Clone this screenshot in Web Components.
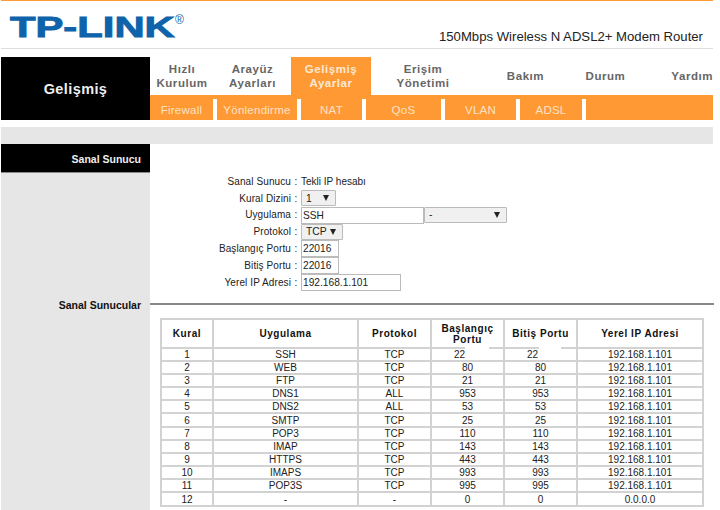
<!DOCTYPE html>
<html>
<head>
<meta charset="utf-8">
<style>
    html, body { margin: 0; padding: 0; background: #fff; }
    body { font-family: "Liberation Sans", Arial, sans-serif; overflow: hidden; height: 510px; }
    router-page { width: 712px; margin-left: 1px; }
</style>
</head>
<body>
<router-page>
    <router-header></router-header>
    <router-nav></router-nav>
    <router-main>
        <side-item slot="item">Sanal Sunucu</side-item>
        <server-form slot="form"></server-form>
        <span slot="section">Sanal Sunucular</span>
        <rule-table slot="table"></rule-table>
    </router-main>
</router-page>
<script>
class RouterPage extends HTMLElement
{
    constructor()
    {
        super();
        this.shadow = this.attachShadow({mode: "open"});
    }
    connectedCallback()
    {
        this.shadow.innerHTML = `
            <style>
                :host { display: block; border-top: 1px solid #f93; }
            </style>
            <slot></slot>
        `;
    }
}
class RouterHeader extends HTMLElement
{
    constructor()
    {
        super();
        this.shadow = this.attachShadow({mode: "open"});
    }
    connectedCallback()
    {
        this.shadow.innerHTML = `
            <style>
                :host {
                    display: flex;
                    justify-content: space-between;
                    height: 47px;
                    border-bottom: 1px solid #ddd;
                }
                .logo {
                    display: flex;
                    align-items: flex-start;
                    padding: 9px 0 0 9px;
                    color: #0f63ab;
                }
                .name {
                    display: inline-block;
                    font: bold 29px/34px "Liberation Sans", sans-serif;
                    -webkit-text-stroke: 0.9px #0f63ab;
                    transform: scaleX(1.44);
                    transform-origin: left top;
                    width: 165px;
                    white-space: nowrap;
                }
                .reg {
                    font: 12px/12px "Liberation Sans", sans-serif;
                    margin-top: 4px;
                }
                .model {
                    align-self: flex-end;
                    font-size: 13.15px;
                    line-height: 14px;
                    padding: 0 10px 4px 0;
                    color: #222;
                }
            </style>
            <div class="logo"><span class="name">TP-LINK</span><span class="reg">®</span></div>
            <div class="model">150Mbps Wireless N ADSL2+ Modem Router</div>
        `;
    }
}
class RouterNav extends HTMLElement
{
    constructor()
    {
        super();
        this.shadow = this.attachShadow({mode: "open"});
    }
    connectedCallback()
    {
        const tabs = [
            ["Hızlı<br>Kurulum", 150, 214],
            ["Arayüz<br>Ayarları", 214, 291],
            ["Gelişmiş<br>Ayarlar", 291, 371, "active"],
            ["Erişim<br>Yönetimi", 371, 475],
            ["Bakım", 475, 576],
            ["Durum", 576, 635],
            ["Yardım", 635, 713, "end"]
        ];
        const subs = [
            ["Firewall", 150, 213], ["Yönlendirme", 217, 297], ["NAT", 301, 362],
            ["QoS", 366, 441], ["VLAN", 445, 516], ["ADSL", 520, 582], ["", 586, 713]
        ];
        this.shadow.innerHTML = `
            <style>
                :host {
                    display: grid;
                    grid-template-columns: 149px 1fr;
                    margin-top: 8px;
                    height: 63px;
                }
                .title {
                    background: #000;
                    color: #eee;
                    font: bold 14.5px "Liberation Sans", sans-serif;
                    letter-spacing: 0.4px;
                    display: flex;
                    align-items: center;
                    justify-content: center;
                    padding-top: 1px;
                }
                .tabs { display: flex; height: 38px; }
                .tab {
                    box-sizing: border-box;
                    display: flex;
                    align-items: center;
                    justify-content: center;
                    text-align: center;
                    font: bold 11.5px/14px "Liberation Sans", sans-serif;
                    letter-spacing: 0.55px;
                    color: #666;
                }
                .tab.active { background: #f93; color: #fbe9d4; }
                .tab.end { justify-content: flex-end; }
                .subs {
                    display: flex;
                    height: 25px;
                    background: #f93;
                }
                .sub {
                    box-sizing: border-box;
                    display: flex;
                    align-items: center;
                    justify-content: center;
                    font: 11.5px "Liberation Sans", sans-serif;
                    letter-spacing: 0.25px;
                    color: #fce3c6;
                    padding-top: 4px;
                }
                .sep { width: 4px; height: 21px; margin-top: 4px; background: #fff; flex: none; }
            </style>
            <div class="title">Gelişmiş</div>
            <div>
                <div class="tabs">
                    ${tabs.map(t => `<div class="tab ${t[3] || ""}" style="width:${t[2] - t[1]}px">${t[0]}</div>`).join("")}
                </div>
                <div class="subs">
                    ${subs.map((s, i) => `${i ? '<div class="sep"></div>' : ""}<div class="sub" style="width:${s[2] - s[1]}px">${s[0]}</div>`).join("")}
                </div>
            </div>
        `;
    }
}
class RouterMain extends HTMLElement
{
    constructor()
    {
        super();
        this.shadow = this.attachShadow({mode: "open"});
    }
    connectedCallback()
    {
        this.shadow.innerHTML = `
            <style>
                :host { display: block; margin-top: 7px; }
                .band { height: 17px; background: #e6e6e6; }
                .grid {
                    display: grid;
                    grid-template-columns: 149px 1fr;
                    grid-template-rows: 153px 15px 1fr;
                    height: 366px;
                }
                .side { background: #e6e6e6; }
                .section {
                    background: #e6e6e6;
                    font: bold 10.5px/17px "Liberation Sans", sans-serif;
                    color: #111;
                    text-align: right;
                    padding-right: 9px;
                }
                .rule { height: 2px; margin-top: 6px; background: #888; }
                .table { padding: 0 10px 0 10px; }
            </style>
            <div class="band"></div>
            <div class="grid">
                <div class="side"><slot name="item"></slot></div>
                <div><slot name="form"></slot></div>
                <div class="section"><slot name="section"></slot></div>
                <div><div class="rule"></div></div>
                <div class="side"></div>
                <div class="table"><slot name="table"></slot></div>
            </div>
        `;
    }
}
class SideItem extends HTMLElement
{
    constructor()
    {
        super();
        this.shadow = this.attachShadow({mode: "open"});
    }
    connectedCallback()
    {
        this.shadow.innerHTML = `
            <style>
                :host {
                    display: block;
                    height: 29px;
                    box-sizing: border-box;
                    background: #000;
                    border-bottom: 1px solid #888;
                    color: #eee;
                    font: bold 10.5px/30px "Liberation Sans", sans-serif;
                    text-align: right;
                    padding-right: 9px;
                }
            </style>
            <slot></slot>
        `;
    }
}
class ServerForm extends HTMLElement
{
    constructor()
    {
        super();
        this.shadow = this.attachShadow({mode: "open"});
    }
    row(label, control)
    {
        return `<div class="label">${label}</div><div class="colon">:</div><div class="control">${control}</div>`;
    }
    select(text, width)
    {
        return `<span class="select" style="width:${width}px"><span>${text}</span><i></i></span>`;
    }
    connectedCallback()
    {
        this.shadow.innerHTML = `
            <style>
                :host {
                    display: grid;
                    grid-template-columns: 141px 10px 1fr;
                    grid-auto-rows: 16.8px;
                    padding-top: 29px;
                    font: 10px "Liberation Sans", sans-serif;
                    color: #222;
                    align-items: center;
                }
                .label { text-align: right; letter-spacing: 0.1px; white-space: nowrap; }
                .colon { text-align: center; }
                .control { display: flex; height: 100%; align-items: center; }
                .input {
                    box-sizing: border-box;
                    height: 17px;
                    border: 1px solid #bbb;
                    background: #fff;
                    padding: 0 0 0 1px;
                    line-height: 15px;
                    font-size: 10.2px;
                    color: #222;
                }
                .select {
                    box-sizing: border-box;
                    display: inline-flex;
                    align-items: center;
                    justify-content: space-between;
                    height: 16px;
                    border: 1px solid #bbb;
                    border-radius: 1px;
                    background: #f0f0f0;
                    padding: 0 6px 0 4px;
                    font-size: 10.3px;
                    color: #222;
                }
                .select i {
                    border-left: 3.5px solid transparent;
                    border-right: 3.5px solid transparent;
                    border-top: 6px solid #222;
                }
            </style>
            ${this.row("Sanal Sunucu", "Tekli IP hesabı")}
            ${this.row("Kural Dizini", this.select("1", 35))}
            ${this.row("Uygulama", `<span class="input" style="width:123px">SSH</span>${this.select("-", 83)}`)}
            ${this.row("Protokol", this.select("TCP", 42))}
            ${this.row("Başlangıç Portu", `<span class="input" style="width:38px">22016</span>`)}
            ${this.row("Bitiş Portu", `<span class="input" style="width:38px">22016</span>`)}
            ${this.row("Yerel IP Adresi", `<span class="input" style="width:100px">192.168.1.101</span>`)}
        `;
    }
}
class RuleTable extends HTMLElement
{
    constructor()
    {
        super();
        this.shadow = this.attachShadow({mode: "open"});
    }
    connectedCallback()
    {
        const rows = [
            ["1", "SSH", "TCP", "22", "22", "192.168.1.101"],
            ["2", "WEB", "TCP", "80", "80", "192.168.1.101"],
            ["3", "FTP", "TCP", "21", "21", "192.168.1.101"],
            ["4", "DNS1", "ALL", "953", "953", "192.168.1.101"],
            ["5", "DNS2", "ALL", "53", "53", "192.168.1.101"],
            ["6", "SMTP", "TCP", "25", "25", "192.168.1.101"],
            ["7", "POP3", "TCP", "110", "110", "192.168.1.101"],
            ["8", "IMAP", "TCP", "143", "143", "192.168.1.101"],
            ["9", "HTTPS", "TCP", "443", "443", "192.168.1.101"],
            ["10", "IMAPS", "TCP", "993", "993", "192.168.1.101"],
            ["11", "POP3S", "TCP", "995", "995", "192.168.1.101"],
            ["12", "-", "-", "0", "0", "0.0.0.0"]
        ];
        this.shadow.innerHTML = `
            <style>
                :host { display: block; position: relative; padding-top: 6px; }
                table {
                    border-collapse: collapse;
                    table-layout: fixed;
                    width: 542px;
                    font: 10px/11px "Liberation Sans", sans-serif;
                    color: #222;
                }
                th, td {
                    border: 2px solid #d2d2d2;
                    padding: 0;
                    text-align: center;
                    overflow: hidden;
                    white-space: nowrap;
                }
                th {
                    height: 27px;
                    font: bold 10px/11px "Liberation Sans", sans-serif;
                    letter-spacing: 0.55px;
                    color: #111;
                    white-space: normal;
                }
                tbody tr { height: 13px; }
                tbody tr:nth-child(6n) { height: 14px; }
                td.cut { padding-right: 16px; }
                .patch { position: absolute; background: #fff; height: 14px; top: 34px; }
            </style>
            <table>
                <colgroup>
                    <col style="width:52px"><col style="width:145px"><col style="width:73px">
                    <col style="width:73px"><col style="width:73px"><col style="width:126px">
                </colgroup>
                <thead>
                    <tr><th>Kural</th><th>Uygulama</th><th>Protokol</th><th>Başlangıç Portu</th><th>Bitiş Portu</th><th>Yerel IP Adresi</th></tr>
                </thead>
                <tbody>
                    ${rows.map((r, i) => `<tr>${r.map((c, j) => `<td class="${i === 0 && (j === 3 || j === 4) ? "cut" : ""}">${c}</td>`).join("")}</tr>`).join("")}
                </tbody>
            </table>
            <div class="patch" style="left:305px;width:24px"></div>
            <div class="patch" style="left:379px;width:22px"></div>
        `;
    }
}
customElements.define("router-page", RouterPage);
customElements.define("router-header", RouterHeader);
customElements.define("router-nav", RouterNav);
customElements.define("router-main", RouterMain);
customElements.define("side-item", SideItem);
customElements.define("server-form", ServerForm);
customElements.define("rule-table", RuleTable);
</script>
</body>
</html>
